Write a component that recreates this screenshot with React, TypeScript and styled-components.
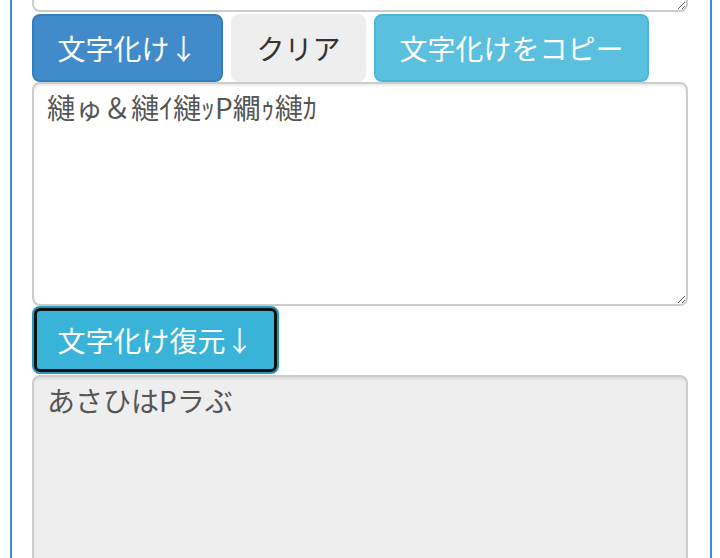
import React from "react";
import styled, { createGlobalStyle, css } from "styled-components";

const Global = createGlobalStyle`
  html, body { margin: 0; padding: 0; background: #fff; overflow: hidden; }
  body { font-family: "Noto Sans CJK JP", "Noto Sans", sans-serif; }
`;

const Container = styled.div`
  box-sizing: border-box;
  width: 702px;
  height: 558px;
  margin-left: 10px;
  border-left: 2px solid #428bca;
  border-right: 2px solid #428bca;
  padding: 0 22px 0 20px;
  overflow: hidden;
`;

const Column = styled.div`
  display: flex;
  flex-direction: column;
  margin-top: -188px;
`;

const Area = styled.textarea<{ $h: number; $disabled?: boolean }>`
  box-sizing: border-box;
  display: block;
  width: 656px;
  height: ${(p) => p.$h}px;
  margin: 0;
  padding: 3px 13px;
  border: 2px solid #ccc;
  border-radius: 8px;
  box-shadow: inset 0 2px 2px rgba(0, 0, 0, 0.075);
  font-family: "Noto Sans CJK JP", "Noto Sans", sans-serif;
  font-size: 28px;
  line-height: 40px;
  color: #555;
  background: ${(p) => (p.$disabled ? "#eee" : "#fff")};
  outline: none;
  resize: vertical;
`;

const ButtonRow = styled.div`
  display: flex;
  gap: 8px;
  margin: 2px 0 0;
`;

type Variant = "primary" | "default" | "info" | "infoFocus";

const variants: Record<Variant, ReturnType<typeof css>> = {
  primary: css`
    background: #428bca;
    border-color: #357ebd;
    color: #fff;
  `,
  default: css`
    background: #eee;
    border-color: #eee;
    color: #333;
  `,
  info: css`
    background: #5bc0de;
    border-color: #46b8da;
    color: #fff;
  `,
  infoFocus: css`
    background: #39b3d7;
    border-color: #269abc;
    color: #fff;
    outline: 3px solid #111;
    outline-offset: -5px;
    box-shadow: inset 0 0 0 6px #39b3d7;
  `,
};

const Button = styled.button<{ $v: Variant }>`
  box-sizing: border-box;
  height: 68px;
  padding: 12px 23.5px;
  border: 2px solid;
  border-radius: 8px;
  font-family: "Noto Sans CJK JP", "Noto Sans", sans-serif;
  font-size: 28px;
  line-height: 40px;
  white-space: nowrap;
  cursor: pointer;
  ${(p) => variants[p.$v]}
`;

const Single = styled.div`
  display: flex;
  margin: 0 0 1px;
`;

export default function App() {
  return (
    <>
      <Global />
      <Container>
        <Column>
          <Area $h={200} readOnly defaultValue="" />
          <ButtonRow>
            <Button $v="primary">文字化け↓</Button>
            <Button $v="default">クリア</Button>
            <Button $v="info">文字化けをコピー</Button>
          </ButtonRow>
          <Area $h={224} readOnly defaultValue="縺ゅ＆縺ｲ縺ｯP繝ｩ縺ｶ" />
          <Single>
            <Button $v="infoFocus">文字化け復元↓</Button>
          </Single>
          <Area $h={224} $disabled readOnly defaultValue="あさひはPラぶ" />
        </Column>
      </Container>
    </>
  );
}
